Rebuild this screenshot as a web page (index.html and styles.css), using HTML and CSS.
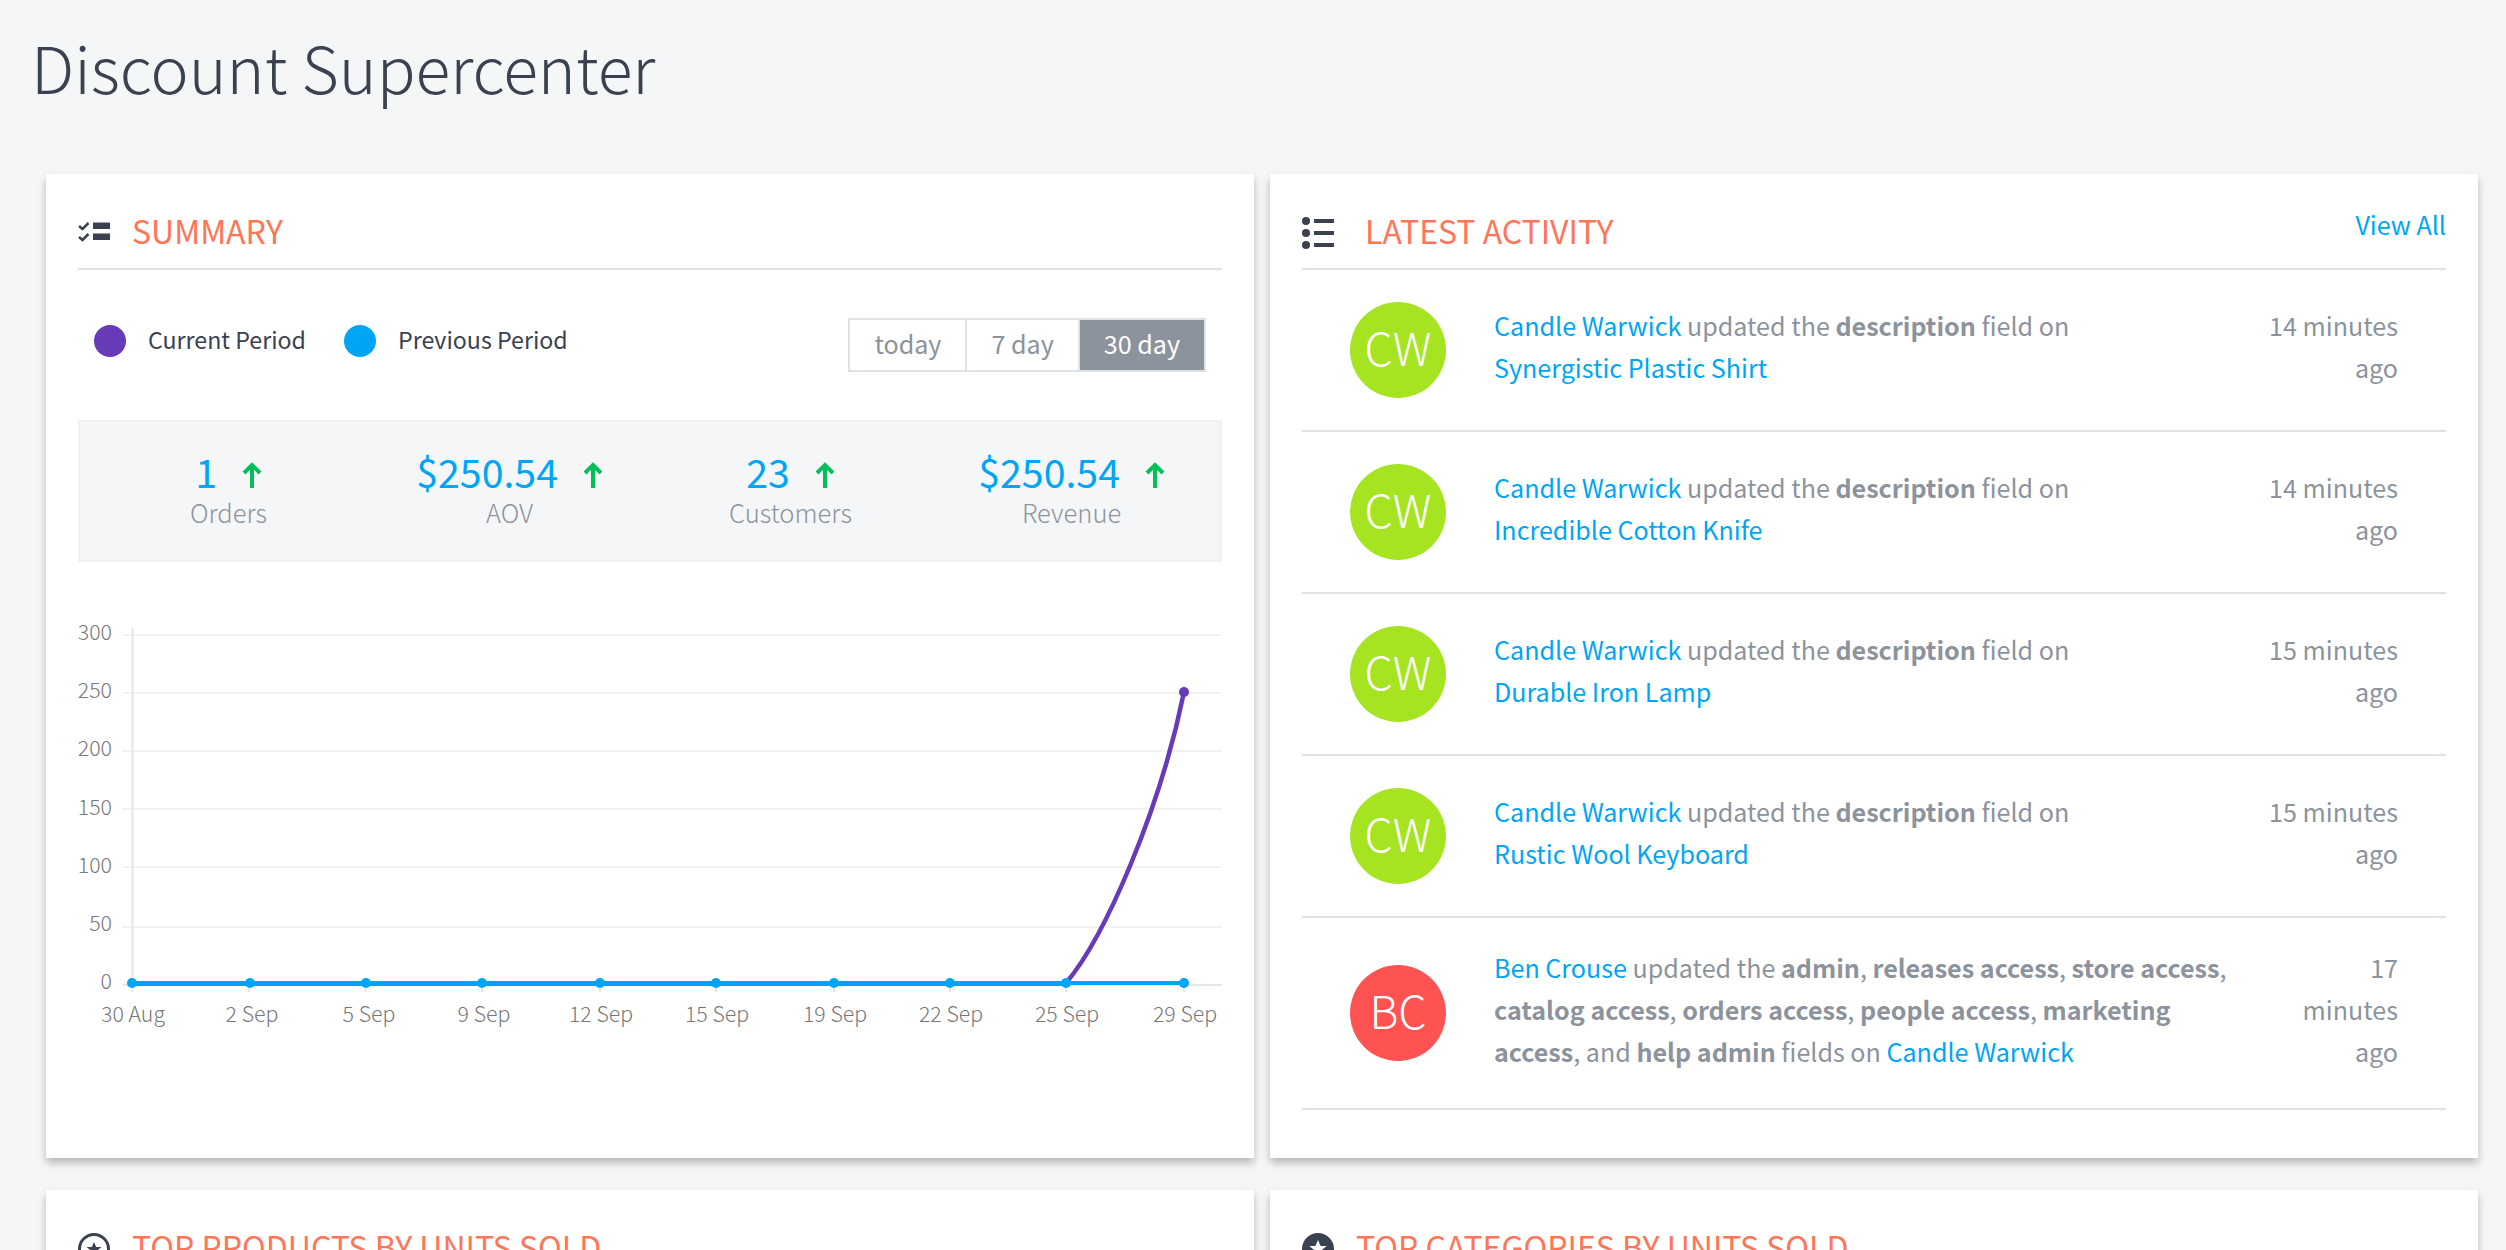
FILE: index.html
```html
<!DOCTYPE html>
<html lang="en">
<head>
    <meta charset="UTF-8">
    <title>Discount Supercenter</title>
    <link rel="stylesheet" href="styles.css">
</head>
<body>
    <h1 class="page-title">Discount Supercenter</h1>

    <div class="cards">
        <div class="card">
            <div class="card-header">
                <svg class="card-icon" viewBox="0 0 32 32">
                    <path d="M1 9l3.500 3 6-6M1 20l3.500 3 6-6" fill="none" stroke="#3a4150" stroke-width="2.500"/>
                    <rect x="15" y="5.500" width="17" height="6.500" fill="#3a4150"/>
                    <rect x="15" y="16.500" width="17" height="6.500" fill="#3a4150"/>
                </svg>
                <h2>Summary</h2>
            </div>

            <div class="toolbar">
                <div class="legend">
                    <span class="dot dot-current"></span>
                    <span class="legend-label">Current Period</span>
                    <span class="dot dot-previous"></span>
                    <span class="legend-label">Previous Period</span>
                </div>
                <div class="range">
                    <a href="#">today</a>
                    <a href="#">7 day</a>
                    <a href="#" class="active">30 day</a>
                </div>
            </div>

            <div class="stats">
                <div class="stat">
                    <div class="stat-value">1
                        <svg class="arrow" viewBox="0 0 20 26"><path d="M10 26V3M2 11l8-8 8 8" fill="none" stroke="#00c05a" stroke-width="4"/></svg>
                    </div>
                    <div class="stat-label">Orders</div>
                </div>
                <div class="stat">
                    <div class="stat-value">$250.54
                        <svg class="arrow" viewBox="0 0 20 26"><path d="M10 26V3M2 11l8-8 8 8" fill="none" stroke="#00c05a" stroke-width="4"/></svg>
                    </div>
                    <div class="stat-label">AOV</div>
                </div>
                <div class="stat">
                    <div class="stat-value">23
                        <svg class="arrow" viewBox="0 0 20 26"><path d="M10 26V3M2 11l8-8 8 8" fill="none" stroke="#00c05a" stroke-width="4"/></svg>
                    </div>
                    <div class="stat-label">Customers</div>
                </div>
                <div class="stat">
                    <div class="stat-value">$250.54
                        <svg class="arrow" viewBox="0 0 20 26"><path d="M10 26V3M2 11l8-8 8 8" fill="none" stroke="#00c05a" stroke-width="4"/></svg>
                    </div>
                    <div class="stat-label">Revenue</div>
                </div>
            </div>

            <svg class="chart" viewBox="78 600 1144 440">
                <g class="grid">
                    <path d="M122 635H1222M122 693H1222M122 751H1222M122 809H1222M122 867H1222M122 927H1222"/>
                </g>
                <path class="axis" d="M122 985H1222M132.500 628V992M249 985v7M365.500 985v7M482 985v7M600 985v7M716 985v7M834 985v7M950 985v7M1066 985v7M1184 985v7"/>
                <g class="y-labels">
                    <text x="112" y="640">300</text>
                    <text x="112" y="698">250</text>
                    <text x="112" y="756">200</text>
                    <text x="112" y="815">150</text>
                    <text x="112" y="873">100</text>
                    <text x="112" y="931">50</text>
                    <text x="112" y="989">0</text>
                </g>
                <g class="x-labels">
                    <text x="133" y="1022">30 Aug</text>
                    <text x="252" y="1022">2 Sep</text>
                    <text x="369" y="1022">5 Sep</text>
                    <text x="484" y="1022">9 Sep</text>
                    <text x="601" y="1022">12 Sep</text>
                    <text x="717" y="1022">15 Sep</text>
                    <text x="835" y="1022">19 Sep</text>
                    <text x="951" y="1022">22 Sep</text>
                    <text x="1067" y="1022">25 Sep</text>
                    <text x="1185" y="1022">29 Sep</text>
                </g>
                <path class="line-current" d="M1066 983C1105 937 1160 810 1184 692"/>
                <circle cx="1184" cy="692" r="5" fill="#673ab7"/>
                <path class="line-previous" d="M1066 983H1184"/>
                <path class="line-previous line-overlap" d="M132 983.500H1066"/>
                <g fill="#00a5f4">
                    <circle cx="132" cy="983" r="5"/>
                    <circle cx="250" cy="983" r="5"/>
                    <circle cx="366" cy="983" r="5"/>
                    <circle cx="482" cy="983" r="5"/>
                    <circle cx="600" cy="983" r="5"/>
                    <circle cx="716" cy="983" r="5"/>
                    <circle cx="834" cy="983" r="5"/>
                    <circle cx="950" cy="983" r="5"/>
                    <circle cx="1066" cy="983" r="5"/>
                    <circle cx="1184" cy="983" r="5"/>
                </g>
            </svg>
        </div>

        <div class="card">
            <div class="card-header">
                <svg class="card-icon icon-wide" viewBox="0 0 32 32">
                    <circle cx="4" cy="4" r="4" fill="#3a4150"/>
                    <circle cx="4" cy="16" r="4" fill="#3a4150"/>
                    <circle cx="4" cy="28" r="4" fill="#3a4150"/>
                    <rect x="12" y="2" width="20" height="4" fill="#3a4150"/>
                    <rect x="12" y="14" width="20" height="4" fill="#3a4150"/>
                    <rect x="12" y="26" width="20" height="4" fill="#3a4150"/>
                </svg>
                <h2>Latest Activity</h2>
                <a href="#" class="view-all">View All</a>
            </div>

            <div class="activity">
                <div class="avatar avatar-green">CW</div>
                <div class="activity-text"><a href="#">Candle Warwick</a> updated the <b>description</b> field on<br><a href="#">Synergistic Plastic Shirt</a></div>
                <div class="activity-time">14 minutes<br>ago</div>
            </div>
            <div class="activity">
                <div class="avatar avatar-green">CW</div>
                <div class="activity-text"><a href="#">Candle Warwick</a> updated the <b>description</b> field on<br><a href="#">Incredible Cotton Knife</a></div>
                <div class="activity-time">14 minutes<br>ago</div>
            </div>
            <div class="activity">
                <div class="avatar avatar-green">CW</div>
                <div class="activity-text"><a href="#">Candle Warwick</a> updated the <b>description</b> field on<br><a href="#">Durable Iron Lamp</a></div>
                <div class="activity-time">15 minutes<br>ago</div>
            </div>
            <div class="activity">
                <div class="avatar avatar-green">CW</div>
                <div class="activity-text"><a href="#">Candle Warwick</a> updated the <b>description</b> field on<br><a href="#">Rustic Wool Keyboard</a></div>
                <div class="activity-time">15 minutes<br>ago</div>
            </div>
            <div class="activity">
                <div class="avatar avatar-red">BC</div>
                <div class="activity-text"><a href="#">Ben Crouse</a> updated the <b>admin</b>, <b>releases access</b>, <b>store access</b>,<br><b>catalog access</b>, <b>orders access</b>, <b>people access</b>, <b>marketing</b><br><b>access</b>, and <b>help admin</b> fields on <a href="#">Candle Warwick</a></div>
                <div class="activity-time">17<br>minutes<br>ago</div>
            </div>
        </div>

        <div class="card">
            <div class="card-header">
                <svg class="card-icon" viewBox="0 0 32 32">
                    <circle cx="16" cy="16" r="14.500" fill="none" stroke="#3a4150" stroke-width="3"/>
                    <path d="M16 9l2.200 5h5.300l-4.300 3.500 1.600 5.500-4.800-3.100-4.800 3.100 1.600-5.500-4.300-3.500h5.300z" fill="#3a4150"/>
                </svg>
                <h2>Top Products by Units Sold</h2>
            </div>
        </div>

        <div class="card">
            <div class="card-header">
                <svg class="card-icon" viewBox="0 0 32 32">
                    <circle cx="16" cy="16" r="16" fill="#3a4150"/>
                    <path d="M16 7l2.600 6h6.100l-4.900 4 1.900 6.500-5.700-3.700-5.700 3.700 1.900-6.500-4.900-4h6.100z" fill="#fff"/>
                </svg>
                <h2>Top Categories by Units Sold</h2>
            </div>
        </div>
    </div>
</body>
</html>
```

FILE: styles.css
```css
html, body {
    height: 100%;
    overflow: hidden;
}

body {
    margin: 0;
    background-color: #f5f6f8;
    color: #3a4150;
    font-family: "Noto Sans CJK SC", "Source Sans Pro", "Open Sans", sans-serif;
    font-size: 25.100px;
    line-height: 42px;
}

a {
    color: #00a5f4;
    text-decoration: none;
}

.page-title {
    margin: 0;
    height: 174px;
    padding: 20px 0 0 31px;
    box-sizing: border-box;
    font-size: 64.300px;
    font-weight: 300;
    line-height: 92px;
}

.cards {
    display: grid;
    grid-template-columns: 1208px 1208px;
    gap: 32px 16px;
    padding-left: 46px;
}

.card {
    background-color: #fff;
    padding: 32px;
    box-shadow: 0 5px 8px rgba(0, 0, 0, 0.25);
}

.card-header {
    display: flex;
    align-items: center;
    height: 54px;
    padding-bottom: 8px;
    border-bottom: 2px solid #dee2e6;
}

.card-icon {
    width: 32px;
    height: 32px;
    margin-right: 22px;
    flex: none;
}

.icon-wide {
    margin-right: 31px;
}

.card-header h2 {
    margin: 0 0 7px;
    color: #ff7557;
    font-size: 32px;
    font-weight: 400;
    line-height: 46px;
    text-transform: uppercase;
}

.view-all {
    margin: -3px 0 0 auto;
    align-self: flex-start;
}

.toolbar {
    display: flex;
    justify-content: space-between;
    align-items: flex-start;
    padding: 48px 16px;
}

.legend {
    display: flex;
    align-items: center;
    margin-top: 5px;
    font-size: 23.200px;
    line-height: 32px;
}

.dot {
    width: 32px;
    height: 32px;
    border-radius: 50%;
    margin-right: 22px;
}

.dot-current {
    background-color: #673ab7;
}

.dot-previous {
    background-color: #00a5f4;
}

.legend-label {
    margin: 0 38px 4px 0;
}

.range {
    display: flex;
    border: 2px solid #dee2e6;
}

.range a {
    height: 50px;
    padding: 0 24px;
    color: #8c939c;
    line-height: 46px;
    border-left: 2px solid #dee2e6;
}

.range a:first-child {
    border-left: none;
}

.range a.active {
    background-color: #8c939c;
    color: #fff;
}

.stats {
    display: grid;
    grid-template-columns: repeat(4, 1fr);
    height: 142px;
    box-sizing: border-box;
    padding: 24px 8px 0;
    background-color: #f5f6f8;
    border: 2px solid #eff0f2;
    text-align: center;
}

.stat-value {
    color: #00a5f4;
    font-size: 39.300px;
    line-height: 50px;
}

.arrow {
    width: 20px;
    height: 26px;
    margin-left: 16px;
}

.stat-label {
    margin-top: -1px;
    color: #8c939c;
    font-size: 25.500px;
    font-weight: 300;
    line-height: 34px;
}

.chart {
    display: block;
    width: 1144px;
    height: 440px;
    margin-top: 38px;
    margin-bottom: 86px;
}

.grid path {
    stroke: #f2f2f2;
    stroke-width: 2;
    fill: none;
}

.axis {
    stroke: #e6e6e6;
    stroke-width: 2;
    fill: none;
}

.chart text {
    fill: #777;
    font-size: 21.300px;
    font-weight: 300;
}

.y-labels text {
    text-anchor: end;
}

.x-labels text {
    text-anchor: middle;
}

.line-current {
    stroke: #673ab7;
    stroke-width: 4.500;
    fill: none;
}

.line-previous {
    stroke: #00a5f4;
    stroke-width: 4;
    fill: none;
}

.line-overlap {
    stroke: #0d9fee;
    stroke-width: 5;
}

.activity {
    display: flex;
    align-items: center;
    padding: 32px 48px;
    border-bottom: 2px solid #dee2e6;
}

.avatar {
    width: 96px;
    height: 96px;
    margin-right: 48px;
    flex: none;
    border-radius: 50%;
    color: #fff;
    font-size: 45px;
    font-weight: 300;
    line-height: 89px;
    text-align: center;
}

.avatar-green {
    background-color: #a6e422;
}

.avatar-red {
    background-color: #ff5252;
}

.activity-text {
    flex: 1;
    margin: -4px 0 4px;
    color: #8c939c;
}

.activity-time {
    margin: -4px 0 4px;
    color: #8c939c;
    text-align: right;
}
```
